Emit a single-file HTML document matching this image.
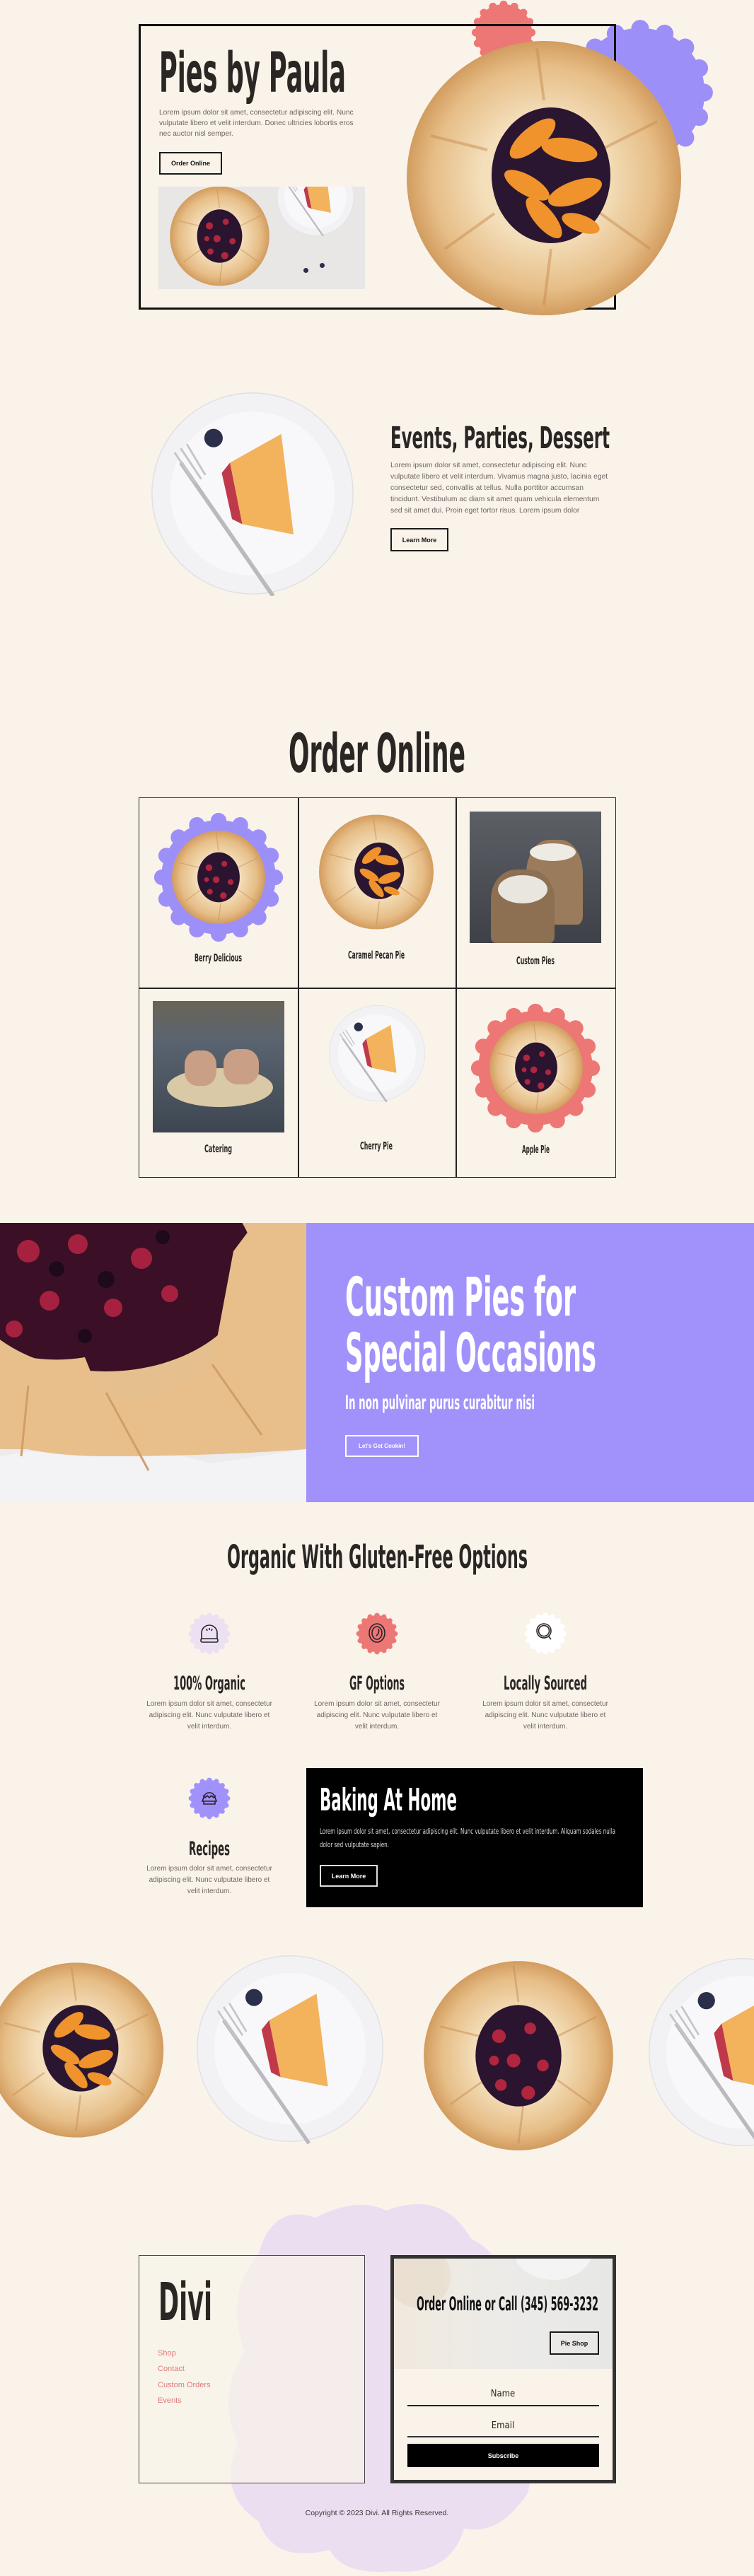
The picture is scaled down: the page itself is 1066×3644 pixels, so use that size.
<!DOCTYPE html>
<html><head><meta charset="utf-8"><style>
*{margin:0;padding:0;box-sizing:border-box}
html,body{width:1066px;height:3644px;background:#f9f3ea;overflow:hidden}
body{position:relative;font-family:"Liberation Sans",sans-serif;color:#6e6663}
.a{position:absolute}
.p{position:absolute;font-size:10px;line-height:15px;white-space:nowrap;color:#6e6663}
.btn{position:absolute;border:2px solid #1a1a1a;font-weight:bold;font-size:9px;color:#111;display:flex;align-items:center;justify-content:center}
svg{position:absolute;overflow:visible}
.d{font-family:"Liberation Sans Narrow","DejaVu Sans Condensed","Liberation Sans",sans-serif;fill:#2a2624;font-weight:bold}
</style></head><body>
<svg width="0" height="0" style="position:absolute">
<defs>
<radialGradient id="crust" cx="50%" cy="50%" r="50%"><stop offset="0.45" stop-color="#f4dfbb"/><stop offset="0.82" stop-color="#e6bd86"/><stop offset="1" stop-color="#d29c5f"/></radialGradient>
<symbol id="scal" viewBox="-100 -100 200 200"><circle r="87"/><circle cx="86" cy="0" r="12"/><circle cx="79.5" cy="32.9" r="12"/><circle cx="60.8" cy="60.8" r="12"/><circle cx="32.9" cy="79.5" r="12"/><circle cx="0" cy="86" r="12"/><circle cx="-32.9" cy="79.5" r="12"/><circle cx="-60.8" cy="60.8" r="12"/><circle cx="-79.5" cy="32.9" r="12"/><circle cx="-86" cy="0" r="12"/><circle cx="-79.5" cy="-32.9" r="12"/><circle cx="-60.8" cy="-60.8" r="12"/><circle cx="-32.9" cy="-79.5" r="12"/><circle cx="0" cy="-86" r="12"/><circle cx="32.9" cy="-79.5" r="12"/><circle cx="60.8" cy="-60.8" r="12"/><circle cx="79.5" cy="-32.9" r="12"/></symbol>
<symbol id="peach" viewBox="0 0 200 200"><circle cx="100" cy="100" r="97" fill="url(#crust)"/><g stroke="#c78c52" stroke-width="2" fill="none" opacity=".5"><path d="M20 70L60 80M30 150L65 125M100 190L105 150M175 150L140 125M180 60L140 80M95 8L100 45"/></g><ellipse cx="105" cy="98" rx="42" ry="48" fill="#2a1630"/><g fill="#f0932c"><ellipse cx="92" cy="72" rx="20" ry="8" transform="rotate(-40 92 72)"/><ellipse cx="118" cy="80" rx="20" ry="8" transform="rotate(10 118 80)"/><ellipse cx="88" cy="105" rx="18" ry="7" transform="rotate(30 88 105)"/><ellipse cx="122" cy="110" rx="20" ry="8" transform="rotate(-20 122 110)"/><ellipse cx="100" cy="128" rx="18" ry="7" transform="rotate(50 100 128)"/><ellipse cx="126" cy="132" rx="14" ry="6" transform="rotate(20 126 132)"/></g></symbol>
<symbol id="berry" viewBox="0 0 200 200"><circle cx="100" cy="100" r="97" fill="url(#crust)"/><g stroke="#c78c52" stroke-width="2" fill="none" opacity=".5"><path d="M20 70L60 80M30 150L65 125M100 190L105 150M175 150L140 125M180 60L140 80M95 8L100 45"/></g><ellipse cx="100" cy="100" rx="44" ry="52" fill="#2b1430"/><g fill="#b0263f"><circle cx="80" cy="80" r="7"/><circle cx="112" cy="72" r="6"/><circle cx="95" cy="105" r="7"/><circle cx="125" cy="110" r="6"/><circle cx="82" cy="130" r="6"/><circle cx="110" cy="138" r="7"/><circle cx="75" cy="105" r="5"/></g></symbol>
<symbol id="plate" viewBox="0 0 200 200"><circle cx="100" cy="100" r="98" fill="#f2f2f4" stroke="#e0e0e4"/><circle cx="100" cy="100" r="80" fill="#f8f8fa"/><circle cx="62" cy="46" r="9" fill="#2c2f4a"/><path d="M78 70L128 42L140 140L90 130Z" fill="#f2b35c"/><path d="M78 70L90 130L80 125L70 80Z" fill="#c0394a"/><path d="M30 70L120 200" stroke="#b9b9bf" stroke-width="4"/><path d="M24 60L44 90M30 56L50 86M36 52L54 82" stroke="#c4c4c9" stroke-width="2"/></symbol>
</defs></svg>

<!-- HERO -->
<svg style="left:666px;top:0" width="92" height="92"><use href="#scal" width="92" height="92" fill="#ec7775"/></svg>
<svg style="left:800px;top:26px" width="210" height="210"><use href="#scal" width="210" height="210" fill="#9d8ff8"/></svg>
<div class="a" style="left:196px;top:34px;width:675px;height:404px;border:3px solid #111"></div>
<svg style="left:0;top:0" width="1066" height="150"><text class="d" x="225" y="130" font-size="78" textLength="264" lengthAdjust="spacingAndGlyphs">Pies by Paula</text></svg>
<div class="p" style="left:225px;top:152px;font-size:10.2px;line-height:15px">Lorem ipsum dolor sit amet, consectetur adipiscing elit. Nunc<br>vulputate libero et velit interdum. Donec ultricies lobortis eros<br>nec auctor nisl semper.</div>
<div class="btn" style="left:225px;top:215px;width:89px;height:32px">Order Online</div>
<div class="a" style="left:224px;top:264px;width:292px;height:145px;background:#e8e7e6;overflow:hidden">
<svg style="left:14px;top:-5px" width="145" height="150"><use href="#berry" width="145" height="150"/></svg>
<svg style="left:167px;top:-40px" width="110" height="110"><use href="#plate" width="110" height="110"/></svg>
<div class="a" style="left:205px;top:115px;width:7px;height:7px;border-radius:50%;background:#2c2f4a"></div>
<div class="a" style="left:228px;top:108px;width:7px;height:7px;border-radius:50%;background:#2c2f4a"></div>
</div>
<svg style="left:566px;top:52px" width="406" height="400"><use href="#peach" width="406" height="400"/></svg>

<!-- EVENTS -->
<svg style="left:212px;top:553px" width="290" height="290"><use href="#plate" width="290" height="290"/></svg>
<svg style="left:0;top:590px" width="1066" height="60"><text class="d" x="552" y="44" font-size="43" textLength="310" lengthAdjust="spacingAndGlyphs">Events, Parties, Dessert</text></svg>
<div class="p" style="left:552px;top:651px;font-size:10.3px;line-height:16px">Lorem ipsum dolor sit amet, consectetur adipiscing elit. Nunc<br>vulputate libero et velit interdum. Vivamus magna justo, lacinia eget<br>consectetur sed, convallis at tellus. Nulla porttitor accumsan<br>tincidunt. Vestibulum ac diam sit amet quam vehicula elementum<br>sed sit amet dui. Proin eget tortor risus. Lorem ipsum dolor</div>
<div class="btn" style="left:552px;top:747px;width:82px;height:33px">Learn More</div>

<!-- ORDER ONLINE -->
<svg style="left:0;top:1020px" width="1066" height="90"><text class="d" x="408" y="72" font-size="76" textLength="250" lengthAdjust="spacingAndGlyphs">Order Online</text></svg>
<div class="a" style="left:196px;top:1128px;width:675px;height:538px;border:1.5px solid #222"></div>
<div class="a" style="left:421px;top:1128px;width:1.5px;height:538px;background:#222"></div>
<div class="a" style="left:644px;top:1128px;width:1.5px;height:538px;background:#222"></div>
<div class="a" style="left:196px;top:1397px;width:675px;height:1.5px;background:#222"></div>
<svg style="left:216px;top:1148px" width="186" height="186"><use href="#scal" width="186" height="186" fill="#9d8ff8"/></svg>
<svg style="left:241px;top:1172px" width="136" height="138"><use href="#berry" width="136" height="138"/></svg>
<svg style="left:445px;top:1150px" width="174" height="167"><use href="#peach" width="174" height="167"/></svg>
<div class="a" style="left:664px;top:1148px;width:186px;height:186px;background:linear-gradient(#5d5f66,#3f4148)">
<div class="a" style="left:80px;top:40px;width:80px;height:120px;border-radius:40% 40% 10% 10%;background:#9a7b5c"></div>
<div class="a" style="left:85px;top:45px;width:65px;height:25px;border-radius:50%;background:#eeeae4"></div>
<div class="a" style="left:30px;top:82px;width:90px;height:104px;border-radius:40% 40% 8% 8%;background:#8d6f52"></div>
<div class="a" style="left:40px;top:90px;width:70px;height:40px;border-radius:50%;background:#e9e6e0"></div></div>
<div class="a" style="left:216px;top:1416px;width:186px;height:186px;background:linear-gradient(#6a6458 0%,#5a6470 30%,#3d4650 100%)">
<div class="a" style="left:20px;top:95px;width:150px;height:55px;border-radius:50%;background:#d9c9a6"></div>
<div class="a" style="left:45px;top:70px;width:45px;height:50px;border-radius:40%;background:#c99f85"></div>
<div class="a" style="left:100px;top:68px;width:50px;height:50px;border-radius:40%;background:#c99f85"></div></div>
<svg style="left:464px;top:1421px" width="138" height="138"><use href="#plate" width="138" height="138"/></svg>
<svg style="left:664px;top:1416px" width="186" height="190"><use href="#scal" width="186" height="190" fill="#ec7775"/></svg>
<svg style="left:690px;top:1442px" width="136" height="136"><use href="#berry" width="136" height="136"/></svg>
<svg style="left:0;top:1340px" width="1066" height="300">
<text class="d" x="275" y="20" font-size="15" textLength="67" lengthAdjust="spacingAndGlyphs">Berry Delicious</text>
<text class="d" x="492" y="16" font-size="15" textLength="80" lengthAdjust="spacingAndGlyphs">Caramel Pecan Pie</text>
<text class="d" x="730" y="24" font-size="15" textLength="54" lengthAdjust="spacingAndGlyphs">Custom Pies</text>
<text class="d" x="289" y="290" font-size="15" textLength="39" lengthAdjust="spacingAndGlyphs">Catering</text>
<text class="d" x="509" y="286" font-size="15" textLength="46" lengthAdjust="spacingAndGlyphs">Cherry Pie</text>
<text class="d" x="738" y="291" font-size="15" textLength="39" lengthAdjust="spacingAndGlyphs">Apple Pie</text></svg>

<!-- BANNER -->
<div class="a" style="left:0;top:1730px;width:1066px;height:395px;background:#a192fb"></div>
<div class="a" style="left:0;top:1730px;width:433px;height:395px;overflow:hidden">
<svg style="left:0;top:0;overflow:hidden" width="433" height="395" viewBox="0 0 433 395">
<rect width="433" height="395" fill="#e6bf8f"/>
<rect y="320" width="433" height="75" fill="#ecebee"/>
<path d="M0 330Q150 300 300 340L433 320L433 395L0 395Z" fill="#f3f2f4"/>
<ellipse cx="150" cy="60" rx="210" ry="150" fill="#3b1026"/>
<g fill="#a5213f"><circle cx="40" cy="40" r="16"/><circle cx="110" cy="30" r="14"/><circle cx="200" cy="50" r="15"/><circle cx="70" cy="110" r="14"/><circle cx="160" cy="120" r="13"/><circle cx="240" cy="100" r="12"/><circle cx="20" cy="150" r="12"/></g>
<g fill="#1e0a18"><circle cx="80" cy="65" r="11"/><circle cx="150" cy="80" r="12"/><circle cx="230" cy="20" r="10"/><circle cx="120" cy="160" r="10"/></g>
<path d="M0 180Q60 200 120 190L140 240Q200 270 300 200L330 40L360 0L433 0L433 320Q300 330 150 330Q60 330 0 310Z" fill="#e8bf8b"/>
<path d="M150 240L210 350M300 200L370 300M40 230L30 330" stroke="#d19e67" stroke-width="3" fill="none"/>
</svg></div>
<svg style="left:0;top:1780px" width="1066" height="230">
<text x="488" y="81" font-size="76" textLength="326" lengthAdjust="spacingAndGlyphs" class="d" style="fill:#fff">Custom Pies for</text>
<text x="488" y="160" font-size="76" textLength="355" lengthAdjust="spacingAndGlyphs" class="d" style="fill:#fff">Special Occasions</text>
<text x="488" y="213" font-size="27" textLength="268" lengthAdjust="spacingAndGlyphs" class="d" style="fill:#fff">In non pulvinar purus curabitur nisi</text></svg>
<div class="btn" style="left:488px;top:2030px;width:104px;height:31px;border-color:#fff;color:#fff;font-size:8px">Let's Get Cookin!</div>

<!-- ORGANIC -->
<svg style="left:0;top:2170px" width="1066" height="60"><text class="d" x="321" y="48" font-size="45" textLength="425" lengthAdjust="spacingAndGlyphs">Organic With Gluten-Free Options</text></svg>
<svg style="left:266px;top:2280px" width="60" height="62"><use href="#scal" width="60" height="62" fill="#ece0f3"/></svg>
<svg style="left:503px;top:2280px" width="60" height="62"><use href="#scal" width="60" height="62" fill="#ec7775"/></svg>
<svg style="left:741px;top:2280px" width="60" height="62"><use href="#scal" width="60" height="62" fill="#ffffff"/></svg>
<svg style="left:266px;top:2513px" width="60" height="62"><use href="#scal" width="60" height="62" fill="#a192fb"/></svg>
<svg style="left:0;top:0" width="1066" height="3000">
<g fill="none" stroke="#2a2228" stroke-width="1.6">
<path d="M285 2318V2310A11 11 0 0 1 307 2310V2318"/><rect x="284" y="2318" width="24" height="5" rx="2"/><path d="M292 2304l1 3M296 2303v3M300 2304l-1 3"/>
<ellipse cx="533" cy="2310" rx="11" ry="13"/><ellipse cx="533" cy="2310" rx="7" ry="9"/><path d="M535 2304q2 6-3 10"/>
<circle cx="769" cy="2307" r="10"/><circle cx="769" cy="2307" r="7.5"/><path d="M775 2314l4 5"/>
<path d="M286 2548h20l-3-8a8 8 0 0 0-14 0z"/><path d="M287 2540l3 3 3-3 3 3 3-3 3 3 3-3"/><path d="M288 2548v4h16v-4"/></g>
<text class="d" x="245" y="2390" font-size="27" textLength="102" lengthAdjust="spacingAndGlyphs">100% Organic</text>
<text class="d" x="494" y="2390" font-size="27" textLength="78" lengthAdjust="spacingAndGlyphs">GF Options</text>
<text class="d" x="712" y="2390" font-size="27" textLength="118" lengthAdjust="spacingAndGlyphs">Locally Sourced</text>
<text class="d" x="267" y="2624" font-size="27" textLength="58" lengthAdjust="spacingAndGlyphs">Recipes</text></svg>
<div class="p" style="left:196px;top:2403px;width:200px;text-align:center;line-height:16px">Lorem ipsum dolor sit amet, consectetur<br>adipiscing elit. Nunc vulputate libero et<br>velit interdum.</div>
<div class="p" style="left:433px;top:2403px;width:200px;text-align:center;line-height:16px">Lorem ipsum dolor sit amet, consectetur<br>adipiscing elit. Nunc vulputate libero et<br>velit interdum.</div>
<div class="p" style="left:671px;top:2403px;width:200px;text-align:center;line-height:16px">Lorem ipsum dolor sit amet, consectetur<br>adipiscing elit. Nunc vulputate libero et<br>velit interdum.</div>
<div class="p" style="left:196px;top:2636px;width:200px;text-align:center;line-height:16px">Lorem ipsum dolor sit amet, consectetur<br>adipiscing elit. Nunc vulputate libero et<br>velit interdum.</div>
<div class="a" style="left:433px;top:2501px;width:476px;height:197px;background:#000"></div>
<svg style="left:0;top:2500px" width="1066" height="130">
<text class="d" x="452" y="61" font-size="44" textLength="194" lengthAdjust="spacingAndGlyphs" style="fill:#fff">Baking At Home</text>
<text class="d" x="452" y="94" font-size="11" textLength="418" lengthAdjust="spacingAndGlyphs" style="fill:#ddd;font-weight:normal">Lorem ipsum dolor sit amet, consectetur adipiscing elit. Nunc vulputate libero et velit interdum. Aliquam sodales nulla</text>
<text class="d" x="452" y="113" font-size="11" textLength="98" lengthAdjust="spacingAndGlyphs" style="fill:#ddd;font-weight:normal">dolor sed vulputate sapien.</text></svg>
<div class="btn" style="left:452px;top:2638px;width:82px;height:31px;border-color:#ddd;color:#fff">Learn More</div>

<!-- CAROUSEL -->
<div class="a" style="left:0;top:2740px;width:1066px;height:340px;overflow:hidden">
<svg style="left:-20px;top:25px" width="255" height="270"><use href="#peach" width="255" height="270"/></svg>
<svg style="left:276px;top:23px" width="268" height="270"><use href="#plate" width="268" height="270"/></svg>
<svg style="left:595px;top:30px" width="276" height="276"><use href="#berry" width="276" height="276"/></svg>
<svg style="left:915px;top:28px" width="270" height="270"><use href="#plate" width="270" height="270"/></svg>
</div>

<!-- FOOTER -->
<svg style="left:306px;top:3107px" width="456" height="537" viewBox="0 0 456 537"><path fill="#ebdef1" d="M60 80Q80 10 140 30Q200 0 240 20Q320 -10 360 60Q420 90 400 160Q450 220 420 300Q456 360 440 420Q400 480 350 470Q330 537 250 530Q180 537 160 500Q80 520 60 460Q0 420 30 350Q0 280 40 220Q10 140 60 80Z"/></svg>
<div class="a" style="left:196px;top:3190px;width:320px;height:323px;border:1.5px solid #444;background:rgba(249,243,234,.7)"></div>
<svg style="left:0;top:3210px" width="560" height="80"><text class="d" x="224" y="72" font-size="74" textLength="76" lengthAdjust="spacingAndGlyphs">Divi</text></svg>
<div class="p" style="left:223px;top:3318px;color:#e07a7a;font-size:11px;line-height:22.3px">Shop<br>Contact<br>Custom Orders<br>Events</div>
<div class="a" style="left:552px;top:3190px;width:319px;height:323px;border:5px solid #333;background:#f9f3ea;overflow:hidden">
<div class="a" style="left:0;top:0;width:309px;height:156px;background:linear-gradient(90deg,#f1e9de,#ecebe8 50%,#e7e7e6)"></div>
<div class="a" style="left:-10px;top:-20px;width:90px;height:90px;border-radius:50%;background:#e6d9c8;opacity:.6"></div>
<div class="a" style="left:170px;top:-50px;width:110px;height:80px;border-radius:50%;background:#f4f4f5"></div></div>
<svg style="left:0;top:3230px" width="1066" height="220"><text class="d" x="589" y="38" font-size="27" textLength="257" lengthAdjust="spacingAndGlyphs" style="fill:#111">Order Online or Call (345) 569-3232</text>
<text class="d" x="711" y="160" font-size="13" text-anchor="middle" style="fill:#222;font-weight:normal">Name</text>
<text class="d" x="711" y="205" font-size="13" text-anchor="middle" style="fill:#222;font-weight:normal">Email</text></svg>
<div class="btn" style="left:777px;top:3298px;width:70px;height:33px;font-size:9px">Pie Shop</div>
<div class="a" style="left:576px;top:3402px;width:271px;height:2px;background:#222"></div>
<div class="a" style="left:576px;top:3446px;width:271px;height:2px;background:#333"></div>
<div class="a" style="left:576px;top:3457px;width:271px;height:33px;background:#000;color:#fff;font-size:9px;font-weight:bold;display:flex;align-items:center;justify-content:center">Subscribe</div>
<div class="p" style="left:0;top:3548px;width:1066px;text-align:center;color:#3a3433;font-size:10.5px">Copyright © 2023 Divi. All Rights Reserved.</div>
</body></html>
